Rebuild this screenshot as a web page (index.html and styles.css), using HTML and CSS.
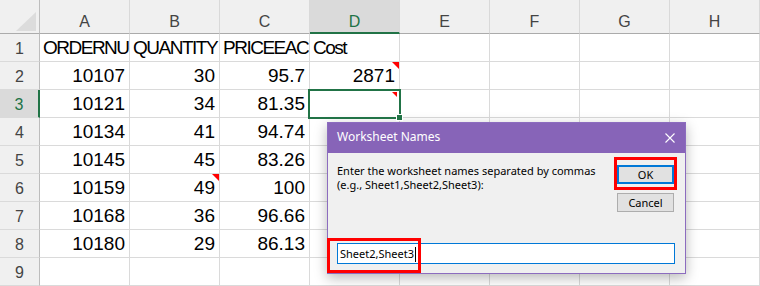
FILE: index.html
```html
<!DOCTYPE html>
<html>
<head>
	<meta charset="utf-8">
	<title>Worksheet Names</title>
	<link rel="stylesheet" href="styles.css">
</head>
<body>

	<div class="sheet">
		<div class="corner"><span class="tri"></span></div>
		<div class="col">A</div>
		<div class="col">B</div>
		<div class="col">C</div>
		<div class="col sel">D</div>
		<div class="col">E</div>
		<div class="col">F</div>
		<div class="col">G</div>
		<div class="col">H</div>

		<div class="row">1</div>
		<div class="cell txt">ORDERNU</div>
		<div class="cell txt">QUANTITY</div>
		<div class="cell txt">PRICEEACH</div>
		<div class="cell txt">Cost</div>
		<div class="cell"></div><div class="cell"></div><div class="cell"></div><div class="cell"></div>

		<div class="row">2</div>
		<div class="cell">10107</div>
		<div class="cell">30</div>
		<div class="cell">95.7</div>
		<div class="cell cm">2871</div>
		<div class="cell"></div><div class="cell"></div><div class="cell"></div><div class="cell"></div>

		<div class="row sel">3</div>
		<div class="cell">10121</div>
		<div class="cell">34</div>
		<div class="cell">81.35</div>
		<div class="cell active"><span class="note"></span><span class="handle"></span></div>
		<div class="cell"></div><div class="cell"></div><div class="cell"></div><div class="cell"></div>

		<div class="row">4</div>
		<div class="cell">10134</div>
		<div class="cell">41</div>
		<div class="cell">94.74</div>
		<div class="cell"></div><div class="cell"></div><div class="cell"></div><div class="cell"></div><div class="cell"></div>

		<div class="row">5</div>
		<div class="cell">10145</div>
		<div class="cell">45</div>
		<div class="cell">83.26</div>
		<div class="cell"></div><div class="cell"></div><div class="cell"></div><div class="cell"></div><div class="cell"></div>

		<div class="row">6</div>
		<div class="cell">10159</div>
		<div class="cell cm">49</div>
		<div class="cell">100</div>
		<div class="cell"></div><div class="cell"></div><div class="cell"></div><div class="cell"></div><div class="cell"></div>

		<div class="row">7</div>
		<div class="cell">10168</div>
		<div class="cell">36</div>
		<div class="cell">96.66</div>
		<div class="cell"></div><div class="cell"></div><div class="cell"></div><div class="cell"></div><div class="cell"></div>

		<div class="row">8</div>
		<div class="cell">10180</div>
		<div class="cell">29</div>
		<div class="cell">86.13</div>
		<div class="cell"></div><div class="cell"></div><div class="cell"></div><div class="cell"></div><div class="cell"></div>

		<div class="row">9</div>
		<div class="cell"></div><div class="cell"></div><div class="cell"></div><div class="cell"></div>
		<div class="cell"></div><div class="cell"></div><div class="cell"></div><div class="cell"></div>
	</div>

	<div class="dialog">
		<div class="dlg-title">
			<span>Worksheet Names</span>
			<svg class="close" width="10" height="10" viewBox="0 0 10 10">
				<path d="M0.5 0.5 L9.5 9.5 M9.5 0.5 L0.5 9.5" stroke="#fff" stroke-width="1.1" fill="none"/>
			</svg>
		</div>
		<div class="dlg-body">
			<p class="prompt">Enter the worksheet names separated by commas<br>(e.g., Sheet1,Sheet2,Sheet3):</p>
			<div class="buttons">
				<div class="btn ok">OK<span class="mark ok-mark"></span></div>
				<div class="btn">Cancel</div>
			</div>
		</div>
		<div class="dlg-foot">
			<div class="field">Sheet2,Sheet3<span class="caret"></span><span class="mark field-mark"></span></div>
		</div>
	</div>

</body>
</html>
```

FILE: styles.css
```css
*{
    margin:0;
    padding:0;
    box-sizing: border-box;
}
body{
    width: 760px;
    height: 286px;
    overflow: hidden;
    position: relative;
    background: #fff;
    font-family: "Liberation Sans", Arial, sans-serif;
}

/* spreadsheet grid */
.sheet{
    display: grid;
    grid-template-columns: 40px repeat(8, 90px);
    grid-template-rows: 34px repeat(9, 28px);
}
.corner{
    background: #f0f0f0;
    border-right: 1px solid #bdbdbd;
    border-bottom: 1px solid #ababab;
    display: flex;
    justify-content: flex-end;
    align-items: flex-end;
    padding: 0 3px 2px 0;
}
.tri{
    width: 0;
    height: 0;
    border-bottom: 19px solid #dcdcdc;
    border-left: 20px solid transparent;
}
.col{
    background: #f0f0f0;
    border-right: 1px solid #d9d9d9;
    border-bottom: 1px solid #ababab;
    color: #444;
    font-size: 16px;
    text-align: center;
    padding-top: 10px;
    line-height: 23px;
}
.col.sel{
    background: #dadada;
    border-bottom: 2px solid #217346;
    color: #217346;
}
.row{
    background: #f0f0f0;
    border-right: 1px solid #bdbdbd;
    border-bottom: 1px solid #dadada;
    color: #444;
    font-size: 16px;
    text-align: center;
    padding-top: 3px;
    line-height: 24px;
}
.row.sel{
    background: #dadada;
    border-right: 2px solid #217346;
    color: #217346;
}
.cell{
    position: relative;
    border-right: 1px solid #dadada;
    border-bottom: 1px solid #dadada;
    font-size: 19px;
    line-height: 26px;
    padding: 1px 4px 0 3px;
    text-align: right;
    white-space: nowrap;
    overflow: hidden;
    color: #000;
}
.cell.txt{
    text-align: left;
    padding-right: 0;
    letter-spacing: -1.5px;
}
.cm::after{
    content: "";
    position: absolute;
    top: 0;
    right: 0;
    border-top: 7px solid #f00;
    border-left: 7px solid transparent;
}
.cell.active{
    overflow: visible;
    z-index: 2;
}
.cell.active::before{
    content: "";
    position: absolute;
    top: -1px;
    left: -2px;
    right: -2px;
    bottom: -2px;
    border: 2px solid #217346;
}
.note{
    position: absolute;
    top: 2px;
    right: 2px;
    border-top: 5px solid #f00;
    border-left: 5px solid transparent;
}
.handle{
    position: absolute;
    right: -4px;
    bottom: -4px;
    width: 7px;
    height: 7px;
    background: #217346;
    border: 1px solid #fff;
}

/* input box dialog */
.dialog{
    position: absolute;
    left: 327px;
    top: 122px;
    width: 359px;
    height: 152px;
    background: #f0f0f0;
    border: 1px solid #8c6cbf;
    box-shadow: 0 4px 12px rgba(0, 0, 0, 0.28);
    display: flex;
    flex-direction: column;
    font-family: "Noto Sans", sans-serif;
    font-size: 11px;
    color: #000;
}
.dlg-title{
    height: 30px;
    background: #8764b8;
    color: #fff;
    display: flex;
    align-items: center;
    justify-content: space-between;
    padding: 0 10px 2px 9px;
    font-size: 12px;
    line-height: 16px;
}
.close{
    margin-top: 2px;
}
.dlg-body{
    flex: 1;
    display: flex;
    justify-content: space-between;
    padding: 11px 11px 0 9px;
}
.prompt{
    line-height: 14px;
}
.buttons{
    display: flex;
    flex-direction: column;
    gap: 9px;
    width: 57px;
    margin-top: 1px;
}
.btn{
    height: 19px;
    background: #e1e1e1;
    border: 1px solid #adadad;
    text-align: center;
    line-height: 17px;
}
.btn.ok{
    position: relative;
    border: 2px solid #0078d7;
    line-height: 15px;
}
.dlg-foot{
    padding: 0 10px 9px 9px;
}
.field{
    position: relative;
    height: 21px;
    background: #fff;
    border: 1px solid #0078d7;
    padding: 1px 2px 0;
    line-height: 18px;
}
.caret{
    display: inline-block;
    width: 1px;
    height: 15px;
    margin-left: 1px;
    background: #000;
    vertical-align: -4px;
}
.mark{
    position: absolute;
    border: 3px solid #f00;
}
.ok-mark{
    left: -5px;
    top: -10px;
    width: 63px;
    height: 33px;
}
.field-mark{
    left: -11px;
    top: -6px;
    width: 94px;
    height: 35px;
}
```
